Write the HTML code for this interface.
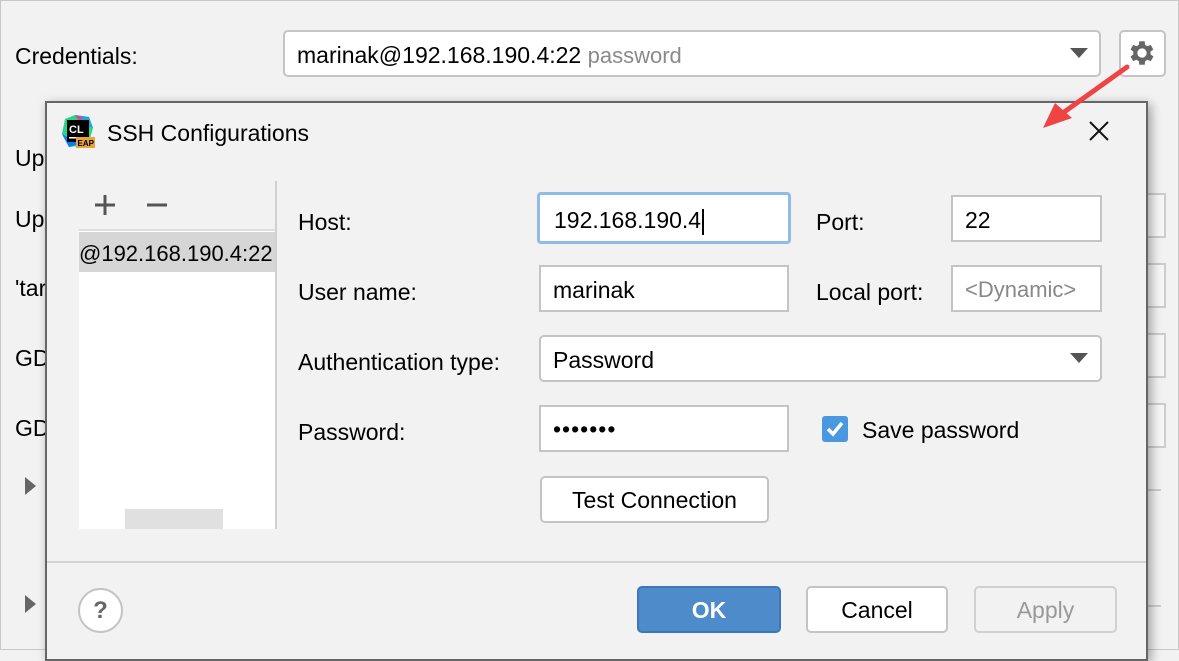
<!DOCTYPE html>
<html><head><style>
*{box-sizing:border-box;margin:0;padding:0}
body{width:1179px;height:650px;overflow:hidden;background:#f2f2f2;font-family:"Liberation Sans",sans-serif;font-size:23px;color:#000;position:relative}
.a{position:absolute;white-space:nowrap}
.lbl{position:absolute;line-height:24px}
.fld{position:absolute;background:#fff;border:2px solid #c4c4c4;line-height:46px;padding-left:12px}
.btn{position:absolute;border:2px solid #c4c4c4;border-radius:5px;background:#fff;text-align:center;line-height:45px}
</style></head><body>
<div class="a" style="left:0;top:0;width:1179px;height:650px;border:1px solid #c8c8c8"></div>
<div class="lbl" style="left:15px;top:44px">Credentials:</div>
<div class="fld" style="left:283px;top:30px;width:818px;height:47px;border-radius:5px;line-height:46px">marinak@192.168.190.4:22 <span style="color:#8a8a8a;font-size:22px">password</span></div>
<svg class="a" style="left:1070px;top:48px" width="18" height="12"><path d="M0 0H18L9 10Z" fill="#555"/></svg>
<div class="btn" style="left:1119px;top:30px;width:47px;height:47px"></div>
<svg class="a" style="left:1126px;top:37px" width="32" height="32" viewBox="0 0 24 24"><path fill="#666" d="M19.4 13a7.5 7.5 0 0 0 0-2l2.1-1.6-2-3.5-2.5 1a7.6 7.6 0 0 0-1.7-1L15 3.2h-4l-.4 2.7a7.6 7.6 0 0 0-1.700 1l-2.5-1-2 3.5L6.5 11a7.5 7.5 0 0 0 0 2l-2.1 1.6 2 3.5 2.5-1a7.6 7.6 0 0 0 1.7 1l.4 2.7h4l.4-2.7a7.6 7.6 0 0 0 1.7-1l2.5 1 2-3.5zM13 15.5a3.5 3.5 0 1 1 0-7 3.5 3.5 0 0 1 0 7z" transform="translate(-1 0)"/></svg>
<div class="lbl" style="left:15px;top:146px">Upl</div>
<div class="lbl" style="left:15px;top:207px">Upl</div>
<div class="lbl" style="left:15px;top:276px">'tar</div>
<div class="lbl" style="left:15px;top:346px">GD</div>
<div class="lbl" style="left:15px;top:416px">GD</div>
<svg class="a" style="left:25px;top:477px" width="12" height="20"><path d="M0 0L11 9L0 18Z" fill="#666"/></svg>
<svg class="a" style="left:25px;top:595px" width="12" height="20"><path d="M0 0L11 9L0 18Z" fill="#666"/></svg>
<div class="a" style="left:1140px;top:193px;width:26px;height:45px;border:2px solid #ccc;background:#f6f6f6"></div>
<div class="a" style="left:1140px;top:263px;width:26px;height:45px;border:2px solid #ccc;background:#f6f6f6"></div>
<div class="a" style="left:1140px;top:333px;width:26px;height:45px;border:2px solid #ccc;background:#f6f6f6"></div>
<div class="a" style="left:1140px;top:403px;width:26px;height:45px;border:2px solid #ccc;background:#f6f6f6"></div>
<div class="a" style="left:1147px;top:489px;width:14px;height:2px;background:#ccc"></div>
<div class="a" style="left:1147px;top:605px;width:14px;height:2px;background:#ccc"></div>

<!-- dialog -->
<div class="a" style="left:45px;top:101px;width:1103px;height:560px;background:#f2f2f2;border:2px solid #666;box-shadow:3px 3px 10px rgba(0,0,0,.35)"></div>
<svg class="a" style="left:61px;top:114px" width="34" height="34" viewBox="0 0 34 34">
<path d="M4 5L14 1L28 3L32 14L27 31L8 33L1 20Z" fill="#21d789"/>
<path d="M14 1L28 3L32 14L20 10Z" fill="#1ea5dc"/><path d="M14 1L22 3L18 7Z" fill="#e5408a"/>
<path d="M1 20L8 33L18 30Z" fill="#087cfa"/>
<rect x="6" y="6" width="22" height="22" fill="#000"/>
<text x="8" y="19" font-family="Liberation Sans" font-weight="bold" font-size="11" fill="#fff">CL</text>
<rect x="8" y="23" width="8" height="1.5" fill="#fff"/>
<rect x="15" y="23" width="19" height="11" fill="#e8a33d"/>
<text x="16.5" y="32" font-family="Liberation Sans" font-weight="bold" font-size="8" fill="#000">EAP</text>
</svg>
<div class="lbl" style="left:107px;top:121px;font-size:23px">SSH Configurations</div>
<svg class="a" style="left:1088px;top:120px" width="22" height="22"><path d="M2 2L20 20M20 2L2 20" stroke="#111" stroke-width="2"/></svg>

<div class="a" style="left:79px;top:181px;width:198px;height:348px;border-right:2px solid #d0d0d0"></div>
<svg class="a" style="left:94px;top:194px" width="22" height="22"><path d="M11 1V21M1 11H21" stroke="#555" stroke-width="3"/></svg>
<svg class="a" style="left:146px;top:194px" width="22" height="22"><path d="M1 11H21" stroke="#555" stroke-width="3"/></svg>
<div class="a" style="left:79px;top:229px;width:196px;height:300px;background:#fff;border-top:2px solid #ddd"></div>
<div class="a" style="left:79px;top:232px;width:196px;height:40px;background:#d6d6d6;line-height:44px;font-size:22px;overflow:hidden">@192.168.190.4:22</div>
<div class="a" style="left:125px;top:509px;width:98px;height:20px;background:#e0e0e0"></div>

<div class="lbl" style="left:298px;top:210px">Host:</div>
<div class="lbl" style="left:298px;top:280px">User name:</div>
<div class="lbl" style="left:298px;top:350px">Authentication type:</div>
<div class="lbl" style="left:298px;top:420px">Password:</div>
<div class="fld" style="left:537px;top:192px;width:254px;height:52px;border:3px solid #8fbbe9;border-radius:4px;line-height:50px;padding-left:14px">192.168.190.4<span style="display:inline-block;width:2px;height:26px;background:#000;vertical-align:middle;margin-left:1px"></span></div>
<div class="fld" style="left:539px;top:265px;width:250px;height:47px">marinak</div>
<div class="fld" style="left:539px;top:335px;width:563px;height:47px;border-radius:5px">Password</div>
<svg class="a" style="left:1070px;top:353px" width="18" height="12"><path d="M0 0H18L9 10Z" fill="#555"/></svg>
<div class="fld" style="left:539px;top:405px;width:250px;height:47px;line-height:44px;letter-spacing:1px">•••••••</div>
<div class="lbl" style="left:816px;top:210px">Port:</div>
<div class="lbl" style="left:816px;top:280px">Local port:</div>
<div class="fld" style="left:951px;top:195px;width:151px;height:47px">22</div>
<div class="fld" style="left:951px;top:265px;width:151px;height:47px;color:#888;font-size:22px">&lt;Dynamic&gt;</div>
<svg class="a" style="left:821px;top:415px" width="28" height="28"><rect x="1" y="1" width="26" height="26" rx="3" fill="#4a98e0"/><path d="M7 14L12 19L21 8" stroke="#fff" stroke-width="3.5" fill="none"/></svg>
<div class="lbl" style="left:862px;top:418px">Save password</div>
<div class="btn" style="left:540px;top:476px;width:229px;height:47px">Test Connection</div>

<div class="a" style="left:47px;top:561px;width:1099px;height:2px;background:#d4d4d4"></div>
<div class="a" style="left:78px;top:588px;width:45px;height:45px;border:2px solid #c4c4c4;border-radius:50%;background:#fff;text-align:center;line-height:41px;font-weight:bold;font-size:24px;color:#666">?</div>
<div class="btn" style="left:637px;top:586px;width:144px;height:47px;background:#4d8bca;border-color:#3e77b5;color:#fff;font-weight:bold;font-size:23px">OK</div>
<div class="btn" style="left:806px;top:586px;width:142px;height:47px">Cancel</div>
<div class="btn" style="left:974px;top:586px;width:143px;height:47px;background:#f2f2f2;border-color:#d0d0d0;color:#999">Apply</div>

<svg class="a" style="left:1030px;top:55px" width="110" height="85"><path d="M97 12L30 60" stroke="#ef4444" stroke-width="5" stroke-linecap="round"/><path d="M13 73L25 48L42 63Z" fill="#ef4444"/></svg>
</body></html>
